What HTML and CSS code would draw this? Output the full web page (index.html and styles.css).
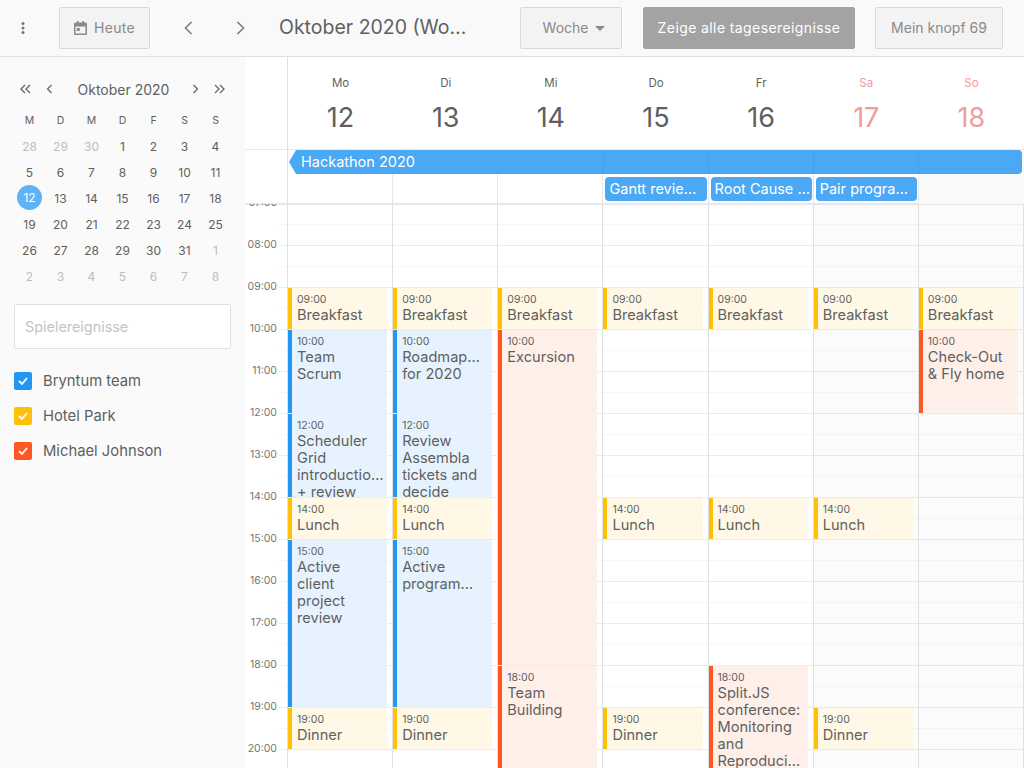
FILE: index.html
```html
<!DOCTYPE html>
<html lang="de">
<head>
    <meta charset="UTF-8">
    <title>Kalender</title>
    <link rel="stylesheet" href="styles.css">
</head>
<body>
    <header class="toolbar">
        <svg class="menu-icon" width="4" height="12" viewBox="0 0 4 12"><circle cx="2" cy="1.5" r="1.5"/><circle cx="2" cy="6" r="1.5"/><circle cx="2" cy="10.5" r="1.5"/></svg>
        <button class="btn btn-today">
            <svg width="13" height="14" viewBox="0 0 13 14"><path d="M3 0h1.6v1.6h3.8V0H10v1.6h1.5A1.5 1.5 0 0 1 13 3.1v9.4a1.5 1.5 0 0 1-1.5 1.5h-10A1.5 1.5 0 0 1 0 12.500V3.100a1.500 1.500 0 0 1 1.500-1.500H3zM1.500 5.500v7h10v-7zM2.800 7h3v3h-3z" fill-rule="evenodd"/></svg>
            Heute
        </button>
        <svg class="nav-arrow nav-prev" width="9" height="14" viewBox="0 0 9 14"><path d="M7.500 1 1.500 7l6 6"/></svg>
        <svg class="nav-arrow nav-next" width="9" height="14" viewBox="0 0 9 14"><path d="M1.500 1l6 6-6 6"/></svg>
        <div class="title">Oktober 2020 (Wo…</div>
        <button class="btn btn-mode">Woche <span class="caret"></span></button>
        <button class="btn btn-primary">Zeige alle tagesereignisse</button>
        <button class="btn btn-custom">Mein knopf 69</button>
    </header>

    <div class="layout">
        <aside class="sidebar">
            <div class="month-nav">
                <svg class="month-arrow first" width="11" height="10" viewBox="0 0 11 10"><path d="M5 1 1 5l4 4M10 1 6 5l4 4"/></svg>
                <svg class="month-arrow" width="7" height="10" viewBox="0 0 7 10"><path d="M5.500 1l-4 4 4 4"/></svg>
                <span class="month-title">Oktober 2020</span>
                <svg class="month-arrow" width="7" height="10" viewBox="0 0 7 10"><path d="M1.500 1l4 4-4 4"/></svg>
                <svg class="month-arrow last" width="11" height="10" viewBox="0 0 11 10"><path d="M1 1l4 4-4 4M6 1l4 4-4 4"/></svg>
            </div>
            <div class="month-grid" id="monthGrid"></div>
            <input class="filter" type="text" placeholder="Spielereignisse">
            <ul class="resources">
                <li><span class="check check-blue"><svg width="10" height="8" viewBox="0 0 10 8"><path d="M1 4l3 3 5-6"/></svg></span>Bryntum team</li>
                <li><span class="check check-yellow"><svg width="10" height="8" viewBox="0 0 10 8"><path d="M1 4l3 3 5-6"/></svg></span>Hotel Park</li>
                <li><span class="check check-red"><svg width="10" height="8" viewBox="0 0 10 8"><path d="M1 4l3 3 5-6"/></svg></span>Michael Johnson</li>
            </ul>
        </aside>

        <section class="calendar">
            <div class="day-header">
                <div class="axis-head"></div>
                <div class="day-name"><span>Mo</span><b>12</b></div>
                <div class="day-name"><span>Di</span><b>13</b></div>
                <div class="day-name"><span>Mi</span><b>14</b></div>
                <div class="day-name"><span>Do</span><b>15</b></div>
                <div class="day-name"><span>Fr</span><b>16</b></div>
                <div class="day-name weekend"><span>Sa</span><b>17</b></div>
                <div class="day-name weekend"><span>So</span><b>18</b></div>
            </div>
            <div class="all-day">
                <div class="axis-head"></div>
                <div class="all-day-grid">
                    <div class="all-day-col"></div>
                    <div class="all-day-col"></div>
                    <div class="all-day-col"></div>
                    <div class="all-day-col"></div>
                    <div class="all-day-col"></div>
                    <div class="all-day-col"></div>
                    <div class="all-day-col off"></div>
                    <div class="banner hackathon">Hackathon 2020</div>
                    <div class="banner small day-4">Gantt revie…</div>
                    <div class="banner small day-5">Root Cause …</div>
                    <div class="banner small day-6">Pair progra…</div>
                </div>
            </div>
            <div class="grid">
                <div class="axis" id="axis"></div>
                <div class="days" id="days"></div>
            </div>
        </section>
    </div>

    <script src="script.js"></script>
</body>
</html>
```

FILE: styles.css
```css
* {
    box-sizing: border-box;
}

html, body {
    height: 100%;
}

body {
    margin: 0;
    height: 768px;
    overflow: hidden;
    background: #fff;
    color: #5f5f5f;
    font-family: Inter, "Noto Sans", sans-serif;
}

.toolbar {
    display: flex;
    align-items: center;
    height: 57px;
    padding-left: 21px;
    background: #f9f9f9;
    border-bottom: 1px solid #e0e0e0;
}

.menu-icon {
    fill: #757575;
}

.btn {
    height: 42px;
    padding-bottom: 2px;
    border: 1px solid #d9d9d9;
    border-radius: 2px;
    background: #f3f3f3;
    color: #8a8a8a;
    font-family: inherit;
    font-size: 14px;
}

.btn-today {
    display: flex;
    align-items: center;
    gap: 7px;
    width: 91px;
    margin-left: 34px;
    padding-left: 14px;
    letter-spacing: 0.3px;
}

.btn-today svg {
    fill: #8a8a8a;
}

.nav-arrow {
    fill: none;
    stroke: #7d7d7d;
    stroke-width: 1.6;
}

.nav-prev {
    margin-left: 34px;
}

.nav-next {
    margin-left: 43px;
}

.title {
    width: 241px;
    margin-left: 34px;
    padding-bottom: 2px;
    font-size: 19.500px;
    white-space: nowrap;
}

.btn-mode {
    width: 102px;
    padding-left: 12px;
}

.caret {
    display: inline-block;
    width: 0;
    height: 0;
    margin-left: 3px;
    border: 5px solid transparent;
    border-top-color: #8a8a8a;
    border-bottom-width: 0;
    vertical-align: 2px;
}

.btn-primary {
    width: 212px;
    margin-left: 21px;
    background: #a3a3a3;
    border-color: #a3a3a3;
    color: #fff;
    letter-spacing: 0.4px;
}

.btn-custom {
    width: 128px;
    margin-left: 20px;
}

.layout {
    display: flex;
    height: 711px;
}

.sidebar {
    flex: none;
    width: 245px;
    padding: 20px 14px 0;
    background: #fafafa;
}

.month-nav {
    display: flex;
    align-items: center;
    height: 24px;
    padding: 0 6px;
}

.month-arrow {
    flex: none;
    fill: none;
    stroke: #666;
    stroke-width: 1.3;
}

.month-arrow.first {
    margin-right: 15px;
}

.month-arrow.last {
    margin-left: 15px;
}

.month-title {
    flex: 1;
    padding-left: 2px;
    text-align: center;
    font-size: 14px;
}

.month-grid {
    display: grid;
    grid-template-columns: repeat(7, 31px);
    grid-template-rows: 25px;
    grid-auto-rows: 26px;
    margin-top: 7px;
    font-size: 12px;
}

.month-cell {
    display: flex;
    align-items: center;
    justify-content: center;
}

.month-cell.head {
    font-size: 10.500px;
}

.month-cell.other {
    color: #bdbdbd;
}

.month-cell.today {
    width: 25px;
    height: 25px;
    margin-left: 3px;
    border-radius: 50%;
    background: #5fb2f7;
    color: #fff;
}

.filter {
    display: block;
    width: 217px;
    height: 45px;
    margin-top: 15px;
    padding: 0 10px;
    border: 1px solid #e0e0e0;
    border-radius: 2px;
    background: #fff;
    font-family: inherit;
    font-size: 14.400px;
}

.filter::placeholder {
    color: #c4c4c4;
}

.resources {
    margin: 23px 0 0;
    padding: 0;
    list-style: none;
    font-size: 14.800px;
}

.resources li {
    display: flex;
    align-items: center;
    height: 18px;
    margin-bottom: 17px;
}

.check {
    display: flex;
    align-items: center;
    justify-content: center;
    width: 18px;
    height: 18px;
    margin-right: 11px;
    border-radius: 2px;
}

.check svg {
    fill: none;
    stroke: #fff;
    stroke-width: 1.800;
}

.check-blue {
    background: #2196f3;
}

.check-yellow {
    background: #ffc107;
}

.check-red {
    background: #ff5722;
}

.calendar {
    flex: 1;
    min-width: 0;
}

.axis-head {
    flex: none;
    width: 43px;
    border-right: 1px solid #e0e0e0;
}

.day-header {
    display: flex;
    height: 93px;
    border-bottom: 1px solid #e8e8e8;
}

.day-name {
    flex: 1;
    text-align: center;
}

.day-name span {
    display: block;
    margin-top: 19px;
    font-size: 11.500px;
    line-height: 14px;
}

.day-name b {
    display: block;
    margin-top: 11px;
    font-size: 27px;
    font-weight: 400;
    line-height: 34px;
}

.day-name.weekend {
    color: #f29b9b;
}

.all-day {
    display: flex;
    height: 54px;
    border-bottom: 1px solid #e8e8e8;
}

.all-day-grid {
    display: grid;
    flex: 1;
    grid-template-columns: repeat(7, 1fr);
    grid-template-rows: 24px 24px 1fr;
    row-gap: 3px;
}

.all-day-col {
    grid-row: 1 / 4;
    border-right: 1px solid #e8e8e8;
}

.all-day-col:nth-child(1) { grid-column: 1; }
.all-day-col:nth-child(2) { grid-column: 2; }
.all-day-col:nth-child(3) { grid-column: 3; }
.all-day-col:nth-child(4) { grid-column: 4; }
.all-day-col:nth-child(5) { grid-column: 5; }
.all-day-col:nth-child(6) { grid-column: 6; }

.all-day-col.off {
    grid-column: 7;
    background: #f9fafa;
    border-right: none;
}

.banner {
    z-index: 1;
    padding-left: 12px;
    background-color: #4ba8f5;
    color: #fff;
    font-size: 14.500px;
    line-height: 24px;
    white-space: nowrap;
    overflow: hidden;
}

/* the day lines at 603, 708, 813 and 918 show through the long event */
.hackathon {
    grid-column: 1 / 8;
    grid-row: 1;
    margin: 0 2px 0 1px;
    border-radius: 0 4px 4px 0;
    background-image: linear-gradient(#46a1ec, #46a1ec), linear-gradient(#46a1ec, #46a1ec), linear-gradient(#46a1ec, #46a1ec), linear-gradient(#46a1ec, #46a1ec);
    background-repeat: no-repeat;
    background-size: 1px 100%;
    background-position: 314px 0, 419px 0, 524px 0, 629px 0;
    clip-path: polygon(7px 0, 100% 0, 100% 100%, 7px 100%, 0 50%);
}

.small {
    grid-row: 2;
    margin: 0 2px 0 2px;
    padding-left: 4px;
    border-radius: 4px;
}

.day-4 { grid-column: 4; }
.day-5 { grid-column: 5; }
.day-6 { grid-column: 6; }

.grid {
    display: flex;
    height: 564px;
    overflow: hidden;
    background: linear-gradient(#e8e8e8, #e8e8e8) no-repeat left top / 100% 1px;
}

.axis {
    flex: none;
    width: 43px;
    overflow: hidden;
    border-right: 1px solid #e0e0e0;
    background: repeating-linear-gradient(to bottom, transparent 0, transparent 20px, #f7f7f7 20px, #f7f7f7 21px, transparent 21px, transparent 41px, #ececec 41px, #ececec 42px) no-repeat right top / 8px 100%;
}

.axis-row {
    display: flow-root;
    height: 42px;
    padding-right: 10px;
    text-align: right;
    font-size: 10.500px;
    line-height: 14px;
    color: #757575;
}

.axis-row span {
    display: block;
    margin-top: -8px;
}

.days {
    display: grid;
    flex: 1;
    grid-template-columns: repeat(7, 1fr);
    background: repeating-linear-gradient(to bottom, transparent 0, transparent 20px, #f7f7f7 20px, #f7f7f7 21px, transparent 21px, transparent 41px, #ececec 41px, #ececec 42px);
}

.day-col {
    display: grid;
    grid-template-rows: repeat(28, 21px);
    padding-right: 5px;
    border-right: 1px solid #e0e0e0;
}

.day-col.off {
    background-color: rgba(120, 140, 130, 0.03);
}

.event {
    min-height: 0;
    margin-bottom: 1px;
    padding: 4px 0 0 5px;
    overflow: hidden;
    border-left: 4px solid;
    font-size: 14.600px;
    line-height: 17px;
}

.event small {
    display: block;
    font-size: 10.500px;
    line-height: 15px;
}

.event div {
    white-space: nowrap;
}

.hotel {
    background: #fff8e6;
    border-color: #ffc107;
}

.team {
    background: #e6f3fe;
    border-color: #2196f3;
}

.michael {
    background: #ffefe9;
    border-color: #ff5722;
}
```

FILE: script.js
```js
// Mini month calendar
var monthHeads = ["M", "D", "M", "D", "F", "S", "S"];
var monthDays = [
    28, 29, 30, 1, 2, 3, 4,
    5, 6, 7, 8, 9, 10, 11,
    12, 13, 14, 15, 16, 17, 18,
    19, 20, 21, 22, 23, 24, 25,
    26, 27, 28, 29, 30, 31, 1,
    2, 3, 4, 5, 6, 7, 8
];

var monthGrid = document.getElementById("monthGrid");

monthHeads.forEach(function (head) {
    var cell = document.createElement("div");
    cell.className = "month-cell head";
    cell.innerText = head;
    monthGrid.appendChild(cell);
});

monthDays.forEach(function (day, index) {
    var cell = document.createElement("div");
    cell.className = "month-cell";
    cell.innerText = day;
    if (index < 3 || index > 33) {
        cell.classList.add("other");
    }
    if (index === 14) {
        cell.classList.add("today");
    }
    monthGrid.appendChild(cell);
});

// Hours on the left of the grid, first row is 07:00
var axis = document.getElementById("axis");

for (var hour = 7; hour < 21; hour++) {
    var row = document.createElement("div");
    var label = document.createElement("span");
    row.className = "axis-row";
    label.innerText = (hour < 10 ? "0" : "") + hour + ":00";
    row.appendChild(label);
    axis.appendChild(row);
}

// Events per day: start hour, end hour, resource, lines of the name
var breakfast = [9, 10, "hotel", ["Breakfast"]];
var lunch = [14, 15, "hotel", ["Lunch"]];
var dinner = [19, 20, "hotel", ["Dinner"]];

var week = [
    [
        breakfast,
        [10, 12, "team", ["Team", "Scrum"]],
        [12, 14, "team", ["Scheduler", "Grid", "introductio…", "+ review"]],
        lunch,
        [15, 19, "team", ["Active", "client", "project", "review"]],
        dinner
    ],
    [
        breakfast,
        [10, 12, "team", ["Roadmap…", "for 2020"]],
        [12, 14, "team", ["Review", "Assembla", "tickets and", "decide"]],
        lunch,
        [15, 19, "team", ["Active", "program…"]],
        dinner
    ],
    [
        breakfast,
        [10, 18, "michael", ["Excursion"]],
        [18, 21, "michael", ["Team", "Building"]]
    ],
    [breakfast, lunch, dinner],
    [
        breakfast,
        lunch,
        [18, 21, "michael", ["Split.JS", "conference:", "Monitoring", "and", "Reproduci…"]]
    ],
    [breakfast, lunch, dinner],
    [
        breakfast,
        [10, 12, "michael", ["Check-Out", "& Fly home"]]
    ]
];

var days = document.getElementById("days");

week.forEach(function (events, dayIndex) {
    var col = document.createElement("div");
    col.className = "day-col";
    if (dayIndex > 4) {
        col.classList.add("off");
    }

    events.forEach(function (item) {
        var event = document.createElement("div");
        var time = document.createElement("small");
        event.className = "event " + item[2];
        // one grid row is half an hour
        event.style.gridRow = ((item[0] - 7) * 2 + 1) + " / span " + ((item[1] - item[0]) * 2);
        time.innerText = (item[0] < 10 ? "0" : "") + item[0] + ":00";
        event.appendChild(time);

        item[3].forEach(function (line) {
            var text = document.createElement("div");
            text.innerText = line;
            event.appendChild(text);
        });

        col.appendChild(event);
    });

    days.appendChild(col);
});
```
